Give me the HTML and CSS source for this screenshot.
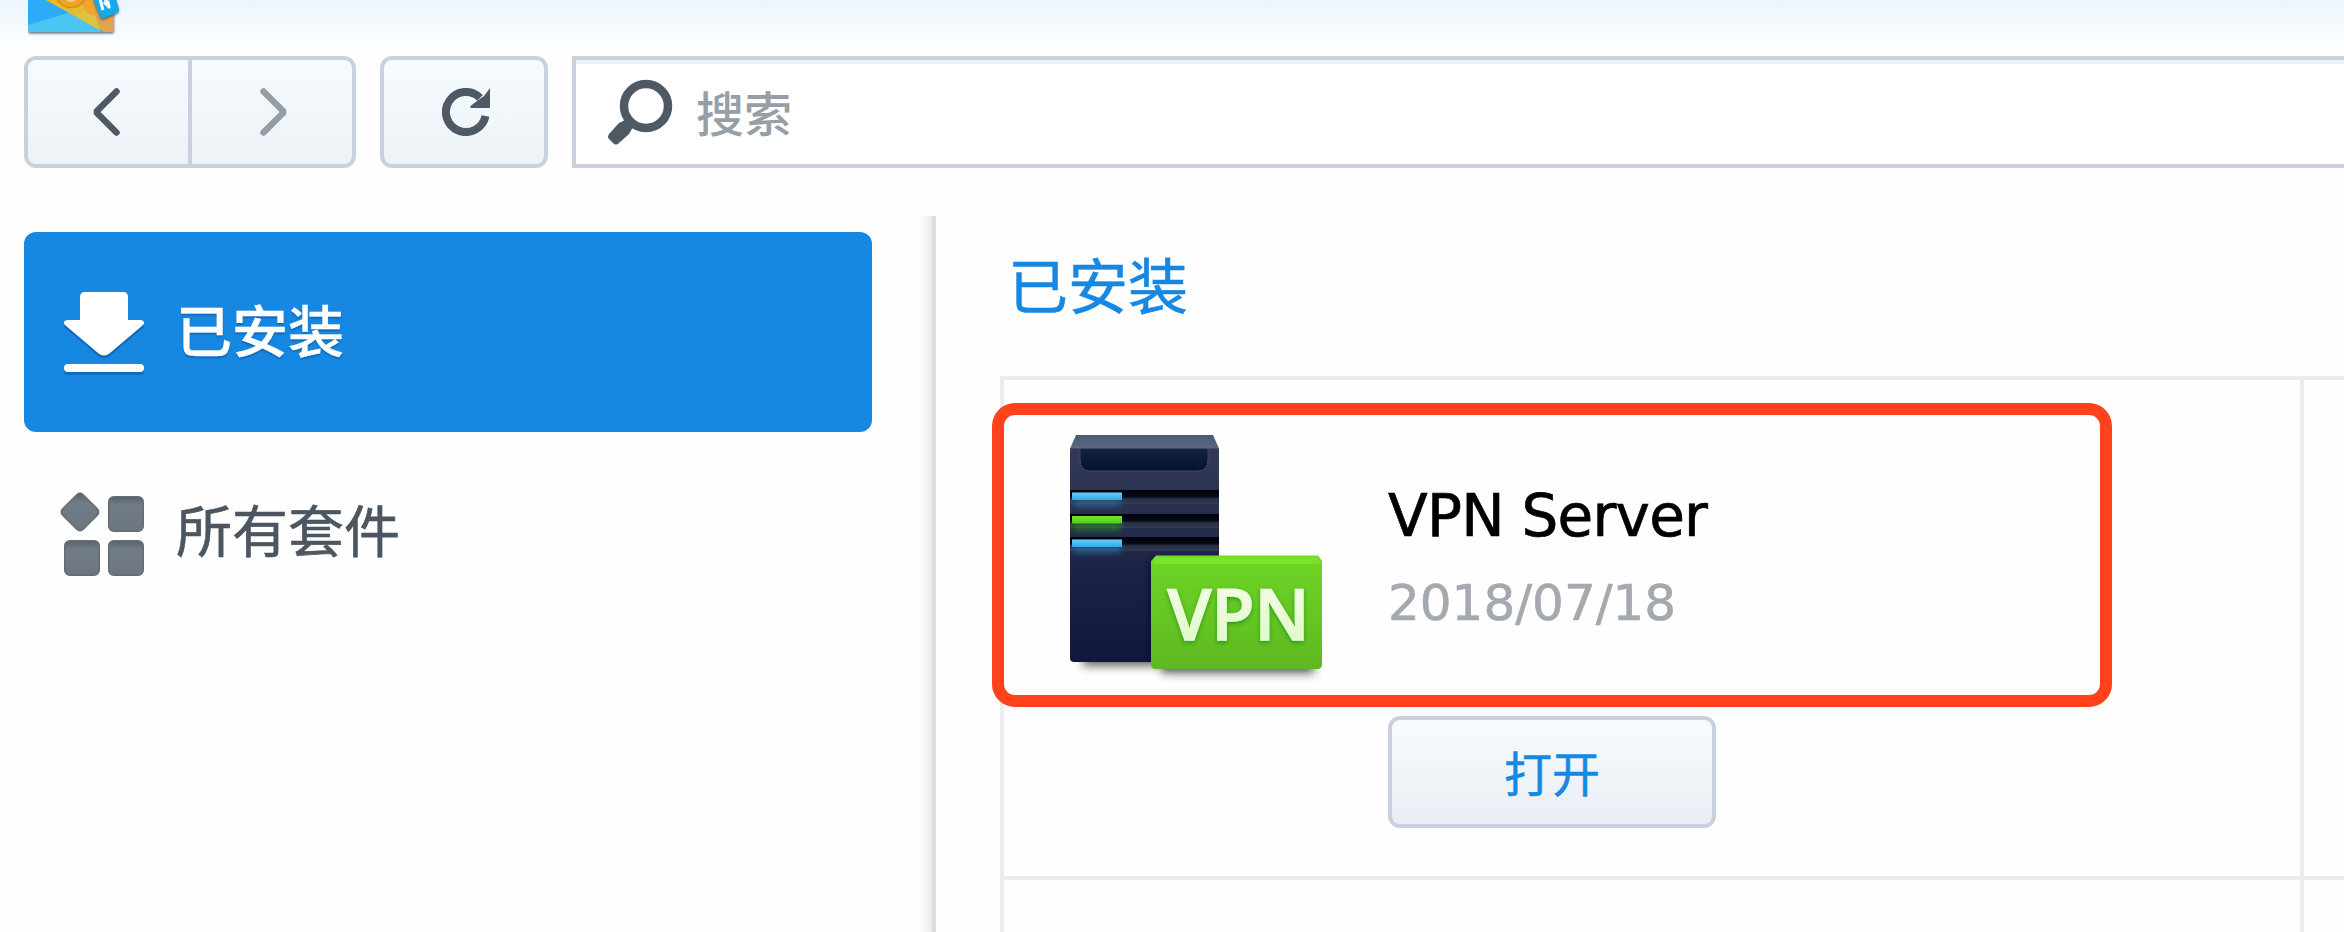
FILE: index.html
```html
<!DOCTYPE html>
<html lang="zh-CN">
<head>
<meta charset="utf-8">
<title>套件中心</title>
<link rel="stylesheet" href="styles.css">
</head>
<body>
<div class="window">
  <header class="titlebar">
    <svg class="app-logo" width="94" height="36" viewBox="0 0 94 36">
      <defs>
        <filter id="logoShadow" x="-10%" y="-10%" width="120%" height="130%"><feDropShadow dx="0" dy="1.5" stdDeviation="0.8" flood-color="#1c3048" flood-opacity=".7"/></filter>
        <linearGradient id="gold" x1="0" y1="0" x2="1" y2="1"><stop offset="0" stop-color="#f5b51c"/><stop offset=".6" stop-color="#e0bd3c"/><stop offset="1" stop-color="#d8bb4c"/></linearGradient>
      </defs>
      <g filter="url(#logoShadow)">
        <path d="M0-5H86V29Q86 32 83 32H3Q0 32 0 29Z" fill="#2fabf8"/>
        <path d="M0 25L50 10L74 32H3Q0 32 0 29Z" fill="#4cc5f3"/>
        <path d="M16-1L72 30L86 10V-5Z" fill="url(#gold)"/>
        <path d="M56-3L86 12V29Q86 32 83 32H76L66 25Z" fill="#e1a452"/>
        <path d="M56 10L67 14L72 30L50 18Z" fill="#dcc342"/>
        <path d="M50-2H62L68 16L60 14Z" fill="#f0a52d"/>
      </g>
      <circle cx="43" cy="-8" r="15.500" fill="#efa51f" stroke="#d18d16" stroke-width="1.500"/>
      <ellipse cx="43" cy="-2" rx="6" ry="4" fill="#f3c590"/>
      <g filter="url(#logoShadow)"><path d="M65-2L86-8L91 9Q91 12 88 13L76 18Q73 19 72 16Z" fill="#18a9e7"/></g>
      <path d="M72-1L75 10M76 0L84-2M76 2L82 8M79-1L81 6" stroke="#fff" stroke-width="3" fill="none"/>
    </svg>
  </header>

  <nav class="toolbar">
    <div class="nav-group">
      <button class="tool-btn tool-btn-back" aria-label="后退">
        <svg width="28" height="48" viewBox="0 0 28 48"><path d="M24.500 3.500L4 24L24.500 44.500" fill="none" stroke="#4f5963" stroke-width="6.500" stroke-linecap="round" stroke-linejoin="bevel"/></svg>
      </button>
      <button class="tool-btn tool-btn-next" aria-label="前进">
        <svg width="28" height="48" viewBox="0 0 28 48"><path d="M3.500 3.500L24 24L3.500 44.500" fill="none" stroke="#959da6" stroke-width="6.500" stroke-linecap="round" stroke-linejoin="bevel"/></svg>
      </button>
    </div>
    <button class="tool-btn tool-btn-refresh" aria-label="刷新">
      <svg width="48" height="48" viewBox="0 0 48 48"><path d="M43.500 28A20 20 0 1 1 38 9.800" fill="none" stroke="#4f5963" stroke-width="8"/><path d="M48 0V20H28.500V18L35 13L42 8Z" fill="#4f5963"/></svg>
    </button>
    <label class="search">
      <svg class="search-icon" width="66" height="66" viewBox="0 0 66 66"><circle cx="38" cy="27" r="22" fill="none" stroke="#4f5963" stroke-width="8.500"/><path d="M17 41L25 48L21 55L11 64Q8 67 5 64L1 60Q-1 58 1 55L11 44Z" fill="#4f5963"/></svg>
      <span class="search-text">搜索</span>
    </label>
  </nav>

  <div class="body">
    <aside class="sidebar">
      <div class="item item-active">
        <svg class="item-icon item-icon-installed" width="84" height="92" viewBox="0 0 84 92"><g class="icon-shadow" fill="#fff"><path d="M21 4H59Q64 4 64 9V32H77Q82 33 79 37L46 65Q40 70 34 65L1 37Q-2 33 3 32H16V9Q16 4 21 4Z"/><rect x="0" y="76" width="80" height="8" rx="4"/></g></svg>
        <span>已安装</span>
      </div>
      <div class="item">
        <svg class="item-icon item-icon-all" width="88" height="88" viewBox="0 0 88 88">
          <defs><linearGradient id="tile" x1="0" y1="0" x2="0" y2="1"><stop offset="0" stop-color="#59626c"/><stop offset=".25" stop-color="#727c87"/><stop offset="1" stop-color="#6c7681"/></linearGradient></defs>
          <g fill="url(#tile)" stroke="#646c76" stroke-width="1.500">
            <path d="M17 2.500Q20 0 23 2.500L37.500 17Q40 20 37.500 23L23 37.500Q20 40 17 37.500L2.500 23Q0 20 2.500 17Z"/>
            <rect x="48.750" y="4.750" width="34.500" height="34.500" rx="5"/>
            <rect x="4.750" y="48.750" width="34.500" height="34.500" rx="5"/>
            <rect x="48.750" y="48.750" width="34.500" height="34.500" rx="5"/>
          </g>
        </svg>
        <span>所有套件</span>
      </div>
    </aside>

    <main class="content">
      <h1 class="heading">已安装</h1>
      <div class="grid">
        <section class="package">
          <svg class="package-icon" width="270" height="260" viewBox="0 0 270 260">
            <defs>
              <linearGradient id="tower" x1="0" y1="0" x2="0" y2="1"><stop offset="0" stop-color="#333a58"/><stop offset=".25" stop-color="#2b3150"/><stop offset=".6" stop-color="#1a2245"/><stop offset="1" stop-color="#10183d"/></linearGradient>
              <linearGradient id="lid" x1="0" y1="0" x2="0" y2="1"><stop offset="0" stop-color="#4b5a74"/><stop offset="1" stop-color="#5c6780"/></linearGradient>
              <linearGradient id="bay" x1="0" y1="0" x2="0" y2="1"><stop offset="0" stop-color="#12233f"/><stop offset="1" stop-color="#03122f"/></linearGradient>
              <linearGradient id="slot" x1="0" y1="0" x2="0" y2="1"><stop offset="0" stop-color="#000208"/><stop offset=".5" stop-color="#070b18"/><stop offset=".6" stop-color="#252d43"/><stop offset="1" stop-color="#333b54"/></linearGradient>
              <linearGradient id="blue" x1="0" y1="0" x2="0" y2="1"><stop offset="0" stop-color="#66cffb"/><stop offset="1" stop-color="#30a8e8"/></linearGradient>
              <linearGradient id="lime" x1="0" y1="0" x2="0" y2="1"><stop offset="0" stop-color="#72ea2b"/><stop offset="1" stop-color="#51cb1c"/></linearGradient>
              <linearGradient id="badge" x1="0" y1="0" x2="0" y2="1"><stop offset="0" stop-color="#6fd526"/><stop offset="1" stop-color="#5eb820"/></linearGradient>
              <linearGradient id="letters" x1="0" y1="0" x2="0" y2="1"><stop offset="0" stop-color="#f8fff0"/><stop offset="1" stop-color="#d9f8bd"/></linearGradient>
              <filter id="soft" x="-20%" y="-80%" width="140%" height="260%"><feGaussianBlur stdDeviation="5"/></filter>
              <filter id="glow" x="-20%" y="-80%" width="140%" height="260%"><feGaussianBlur stdDeviation="3"/></filter>
              <filter id="textShadow" x="-10%" y="-10%" width="120%" height="130%"><feDropShadow dx="0" dy="2" stdDeviation="2" flood-color="#159616" flood-opacity=".85"/></filter>
              <clipPath id="towerClip"><path d="M0 13L6 0H143L149 13V227H0Z"/></clipPath>
            </defs>
            <rect x="13" y="214" width="85" height="17" fill="#333" opacity=".75" filter="url(#soft)"/>
            <rect x="92" y="221" width="152" height="17" fill="#222" opacity=".75" filter="url(#soft)"/>
            <path d="M0 13H149V227H4Q0 227 0 223Z" fill="url(#tower)"/>
            <path d="M6 0H143L149 13.500H0Z" fill="url(#lid)"/>
            <path d="M10 13.500H138V25Q138 36 127 36H21Q10 36 10 25Z" fill="url(#bay)" stroke="#414961" stroke-width="1"/>
            <rect x="0" y="55" width="149" height="14" fill="url(#slot)"/>
            <rect x="0" y="79" width="149" height="14" fill="url(#slot)"/>
            <rect x="0" y="102" width="149" height="14" fill="url(#slot)"/>
            <g clip-path="url(#towerClip)">
              <rect x="3" y="64" width="48" height="7" fill="#2b83ba" opacity=".6" filter="url(#glow)"/>
              <rect x="3" y="88" width="48" height="7" fill="#2a991e" opacity=".7" filter="url(#glow)"/>
              <rect x="3" y="111" width="48" height="7" fill="#2b83ba" opacity=".6" filter="url(#glow)"/>
              <rect x="80" y="124" width="84" height="106" fill="#060a22" opacity=".65" filter="url(#glow)"/>
            </g>
            <rect x="2" y="57.500" width="50" height="7.500" fill="url(#blue)"/>
            <rect x="2" y="81" width="50" height="7.500" fill="url(#lime)"/>
            <rect x="2" y="104.500" width="50" height="7.500" fill="url(#blue)"/>
            <path d="M86 120.500H248L252 126V229Q252 234 247 234H86Q81 234 81 229V126Z" fill="url(#badge)"/>
            <path d="M86 121.500H247L251 127Q249 129 246 129H87Q84 129 82 127Z" fill="#78e32b"/>
            <text class="badge-text" x="97.500" y="205" textLength="142" lengthAdjust="spacingAndGlyphs" fill="url(#letters)" stroke="#eafcd8" stroke-width="1.500" filter="url(#textShadow)">VPN</text>
          </svg>
          <div class="package-info">
            <div class="package-name">VPN Server</div>
            <div class="package-date">2018/07/18</div>
            <button class="open-btn">打开</button>
          </div>
          <div class="highlight"></div>
        </section>
        <section class="cell cell-top"></section>
        <section class="cell cell-first"></section>
        <section class="cell"></section>
      </div>
    </main>
  </div>
</div>
</body>
</html>
```

FILE: styles.css
```css
* { box-sizing: border-box; }

body {
  margin: 0;
  background: #fefefe;
  font-family: "DejaVu Sans", "Noto Sans CJK SC", sans-serif;
}

button {
  font-family: "Noto Sans CJK SC", sans-serif;
  margin: 0;
  padding: 0;
}

.window {
  width: 2344px;
  height: 932px;
  display: flex;
  flex-direction: column;
  overflow: hidden;
  background: linear-gradient(#ecf4fd, #f5fafe 24px, #fefefe 52px);
}

.titlebar {
  height: 56px;
  flex: none;
  padding-left: 28px;
}

.app-logo { display: block; }

.toolbar {
  display: flex;
  flex: none;
  height: 112px;
  padding-left: 24px;
  gap: 24px;
}

.nav-group { display: flex; }

.tool-btn {
  display: flex;
  align-items: center;
  justify-content: center;
  width: 168px;
  height: 112px;
  border: 4px solid #c8d1dd;
  background: linear-gradient(#f6fbff, #edf2f7);
}

.tool-btn-back {
  border-radius: 12px 0 0 12px;
  padding-right: 4px;
}

.tool-btn-next {
  margin-left: -4px;
  border-radius: 0 12px 12px 0;
  padding-left: 4px;
}

.tool-btn-refresh {
  border-radius: 12px;
  padding-left: 4px;
}

.search {
  display: flex;
  align-items: flex-start;
  flex: 1;
  border: 4px solid #c8d1dd;
  border-right: 0;
  background: #fff;
  box-shadow: inset 0 4px #edf1f6;
  padding: 19px 0 0 32px;
}

.search-icon { flex: none; }

.search-text {
  margin: 4px 0 0 22px;
  font: 500 48px/56px "Noto Sans CJK SC", sans-serif;
  color: #969ea8;
}

.body {
  display: flex;
  flex: 1;
  margin-top: 48px;
}

.sidebar {
  width: 936px;
  flex: none;
  padding: 16px 60px 0 24px;
  border-right: 4px solid #dcdde1;
  background: linear-gradient(to left, #ececef, #fefefe 14px);
}

.item {
  display: flex;
  align-items: center;
  height: 200px;
  padding: 0 0 8px 40px;
  border-radius: 12px;
  font: 400 56px/80px "Noto Sans CJK SC", sans-serif;
  color: #4c5660;
  -webkit-text-stroke: .6px #4c5660;
}

.item-active {
  background: #1788e2;
  color: #fff;
  font-weight: 500;
  -webkit-text-stroke: .4px #fff;
  text-shadow: 0 2px 2px rgba(0, 50, 110, .4);
}

.item-icon-installed { margin: 12px 28px 0 0; }

.item-icon-all { margin: 16px 28px 0 -4px; }

.icon-shadow { filter: drop-shadow(0 3px 0 rgba(10, 75, 140, .45)); }

.content {
  flex: 1;
  padding-left: 64px;
}

.heading {
  height: 160px;
  margin: 0;
  padding: 27px 0 0 8px;
  font: 400 60px/80px "Noto Sans CJK SC", sans-serif;
  color: #1788e2;
  -webkit-text-stroke: .6px #1788e2;
}

.grid {
  display: grid;
  grid-template-columns: 1304px 1fr;
  grid-template-rows: 500px 1fr;
  height: 556px;
  border-top: 4px solid #e9edf2;
}

.package {
  position: relative;
  display: flex;
  border: 4px solid #e9edf2;
  border-top: 0;
  padding: 55px 0 0 66px;
}

.cell-top { border-bottom: 4px solid #e9edf2; }

.cell-first {
  border-left: 4px solid #e9edf2;
  border-right: 4px solid #e9edf2;
}

.package-icon { flex: none; }

.package-info {
  padding: 41px 0 0 48px;
}

.package-name {
  font-size: 58px;
  line-height: 80px;
  letter-spacing: -.75px;
  color: #000;
  -webkit-text-stroke: .7px #000;
  white-space: nowrap;
}

.package-date {
  margin-top: 7px;
  font-size: 50px;
  line-height: 80px;
  color: #a4a9af;
  -webkit-text-stroke: .6px #a4a9af;
}

.open-btn {
  display: block;
  width: 328px;
  height: 112px;
  margin-top: 73px;
  border: 4px solid #c8d1dd;
  border-radius: 12px;
  background: linear-gradient(#f6fbff, #e9eef4);
  font-size: 48px;
  line-height: 96px;
  padding-bottom: 3px;
  color: #1788e2;
  -webkit-text-stroke: .5px #1788e2;
}

.highlight {
  position: absolute;
  left: -12px;
  top: 23px;
  width: 1120px;
  height: 304px;
  border: 12px solid #ff421c;
  border-radius: 23px;
}

.badge-text {
  font: 600 70px "Open Sans", sans-serif;
}
```
